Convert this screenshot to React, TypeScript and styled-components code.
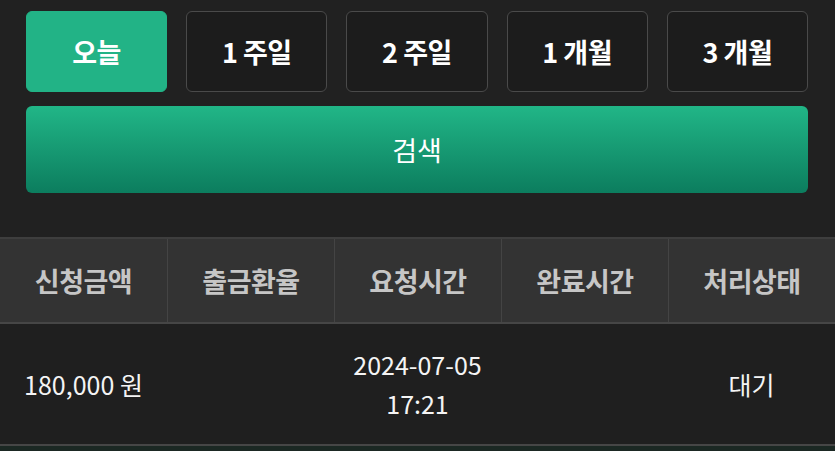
import React from 'react';
import styled, { createGlobalStyle } from 'styled-components';

const GlobalStyle = createGlobalStyle`
  html, body {
    margin : 0;
    padding : 0;
    background : #212121;
    font-family : "Noto Sans CJK KR", "Noto Sans", sans-serif;
  }
`

const B_Wrap = styled.div`
  width : 835px;
  height : 451px;
  overflow : hidden;
  background : #212121;
`

const B_FilterArea = styled.div`
  padding : 11px 27px 0 26px;
`

const B_PeriodRow = styled.div`
  display : grid;
  grid-template-columns : repeat(5, 1fr);
  gap : 19px;
`

const B_PeriodButton = styled.button`
  height : 81px;
  border-radius : 6px;
  border : 1px solid ${(props : {active : boolean}) => props.active ? '#22b386' : '#4a4a4a'};
  background : ${(props : {active : boolean}) => props.active ? '#22b386' : '#1c1c1c'};
  color : #fff;
  font-family : inherit;
  font-size : 27px;
  font-weight : 700;
  letter-spacing : -0.5px;
  padding : 0;
`

const B_SearchButton = styled.button`
  display : block;
  width : 100%;
  height : 87px;
  margin-top : 14px;
  border : none;
  border-radius : 6px;
  background : linear-gradient(180deg, #21b687 0%, #0c7d5e 100%);
  color : #fff;
  font-family : inherit;
  font-size : 27px;
  font-weight : 400;
`

const B_Table = styled.div`
  margin-top : 44px;
  border-top : 2px solid #3e3e3e;
`

const B_Row = styled.div`
  display : grid;
  grid-template-columns : repeat(5, 1fr);
  height : ${(props : {h : number}) => `${props.h}px`};
  border-bottom : 2px solid #464646;
`

const B_HeadCell = styled.div`
  display : flex;
  align-items : center;
  justify-content : center;
  background : #333333;
  color : #c6c6c6;
  font-size : 27px;
  font-weight : 700;
  letter-spacing : -0.5px;
  & + & {
    border-left : 1px solid #444444;
  }
`

const B_Cell = styled.div`
  display : flex;
  flex-direction : column;
  align-items : center;
  justify-content : center;
  background : #1f1f1f;
  color : #f4f4f4;
  font-size : 25px;
  line-height : 39px;
`

const B_NextRow = styled.div`
  height : 20px;
  background : #1b2823;
`

const periods = ['오늘', '1 주일', '2 주일', '1 개월', '3 개월'];
const heads = ['신청금액', '출금환율', '요청시간', '완료시간', '처리상태'];

const App = () => {
  return (
    <>
      <GlobalStyle />
      <B_Wrap>
        <B_FilterArea>
          <B_PeriodRow>
            {periods.map((p, index) => <B_PeriodButton active={index === 0} key={index + 'period'}>{p}</B_PeriodButton>)}
          </B_PeriodRow>
          <B_SearchButton>검색</B_SearchButton>
        </B_FilterArea>
        <B_Table>
          <B_Row h={83}>
            {heads.map((h, index) => <B_HeadCell key={index + 'head'}>{h}</B_HeadCell>)}
          </B_Row>
          <B_Row h={120}>
            <B_Cell>180,000 원</B_Cell>
            <B_Cell />
            <B_Cell>
              <span>2024-07-05</span>
              <span>17:21</span>
            </B_Cell>
            <B_Cell />
            <B_Cell>대기</B_Cell>
          </B_Row>
          <B_NextRow />
        </B_Table>
      </B_Wrap>
    </>
  )
}

export default App;
